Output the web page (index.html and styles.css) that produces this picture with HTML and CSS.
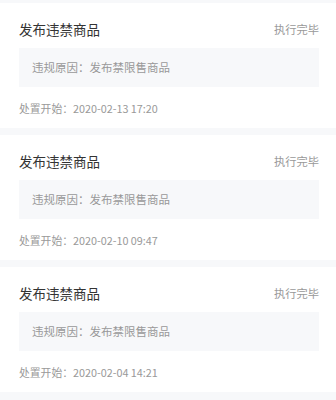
FILE: index.html
```html
<!DOCTYPE html>
<html lang="zh-CN">
<head>
<meta charset="UTF-8" />
<meta name="viewport" content="width=device-width, initial-scale=1" />
<title>处置记录</title>
<link rel="stylesheet" href="styles.css">
</head>
<body>

<div class="record-list">
  <div class="record">
    <div class="record-head">
      <span class="record-title">发布违禁商品</span>
      <span class="record-status">执行完毕</span>
    </div>
    <div class="record-reason">违规原因：发布禁限售商品</div>
    <div class="record-time">处置开始：2020-02-13 17:20</div>
  </div>

  <div class="record">
    <div class="record-head">
      <span class="record-title">发布违禁商品</span>
      <span class="record-status">执行完毕</span>
    </div>
    <div class="record-reason">违规原因：发布禁限售商品</div>
    <div class="record-time">处置开始：2020-02-10 09:47</div>
  </div>

  <div class="record">
    <div class="record-head">
      <span class="record-title">发布违禁商品</span>
      <span class="record-status">执行完毕</span>
    </div>
    <div class="record-reason">违规原因：发布禁限售商品</div>
    <div class="record-time">处置开始：2020-02-04 14:21</div>
  </div>
</div>

</body>
</html>
```

FILE: styles.css
```css
body {
  margin: 0;
  background: #f7f8fa;
  font-family: "Noto Sans CJK SC", "Noto Sans", sans-serif;
}
.record-list {
  display: flex;
  flex-direction: column;
  gap: 7px;
  padding: 3px 0 8px;
}
.record {
  background: #fff;
  padding: 15px 17px 10px 19px;
  height: 100px;
}
.record-head {
  display: flex;
  justify-content: space-between;
  align-items: center;
  height: 22px;
}
.record-title {
  font-size: 13.5px;
  color: #333;
}
.record-status {
  font-size: 11.25px;
  color: #999;
}
.record-reason {
  margin-top: 8px;
  height: 39px;
  line-height: 39px;
  padding-left: 13px;
  background: #f7f8fa;
  font-size: 11.5px;
  color: #999;
}
.record-time {
  margin-top: 12px;
  line-height: 19px;
  font-size: 10.8px;
  color: #999;
}
```
